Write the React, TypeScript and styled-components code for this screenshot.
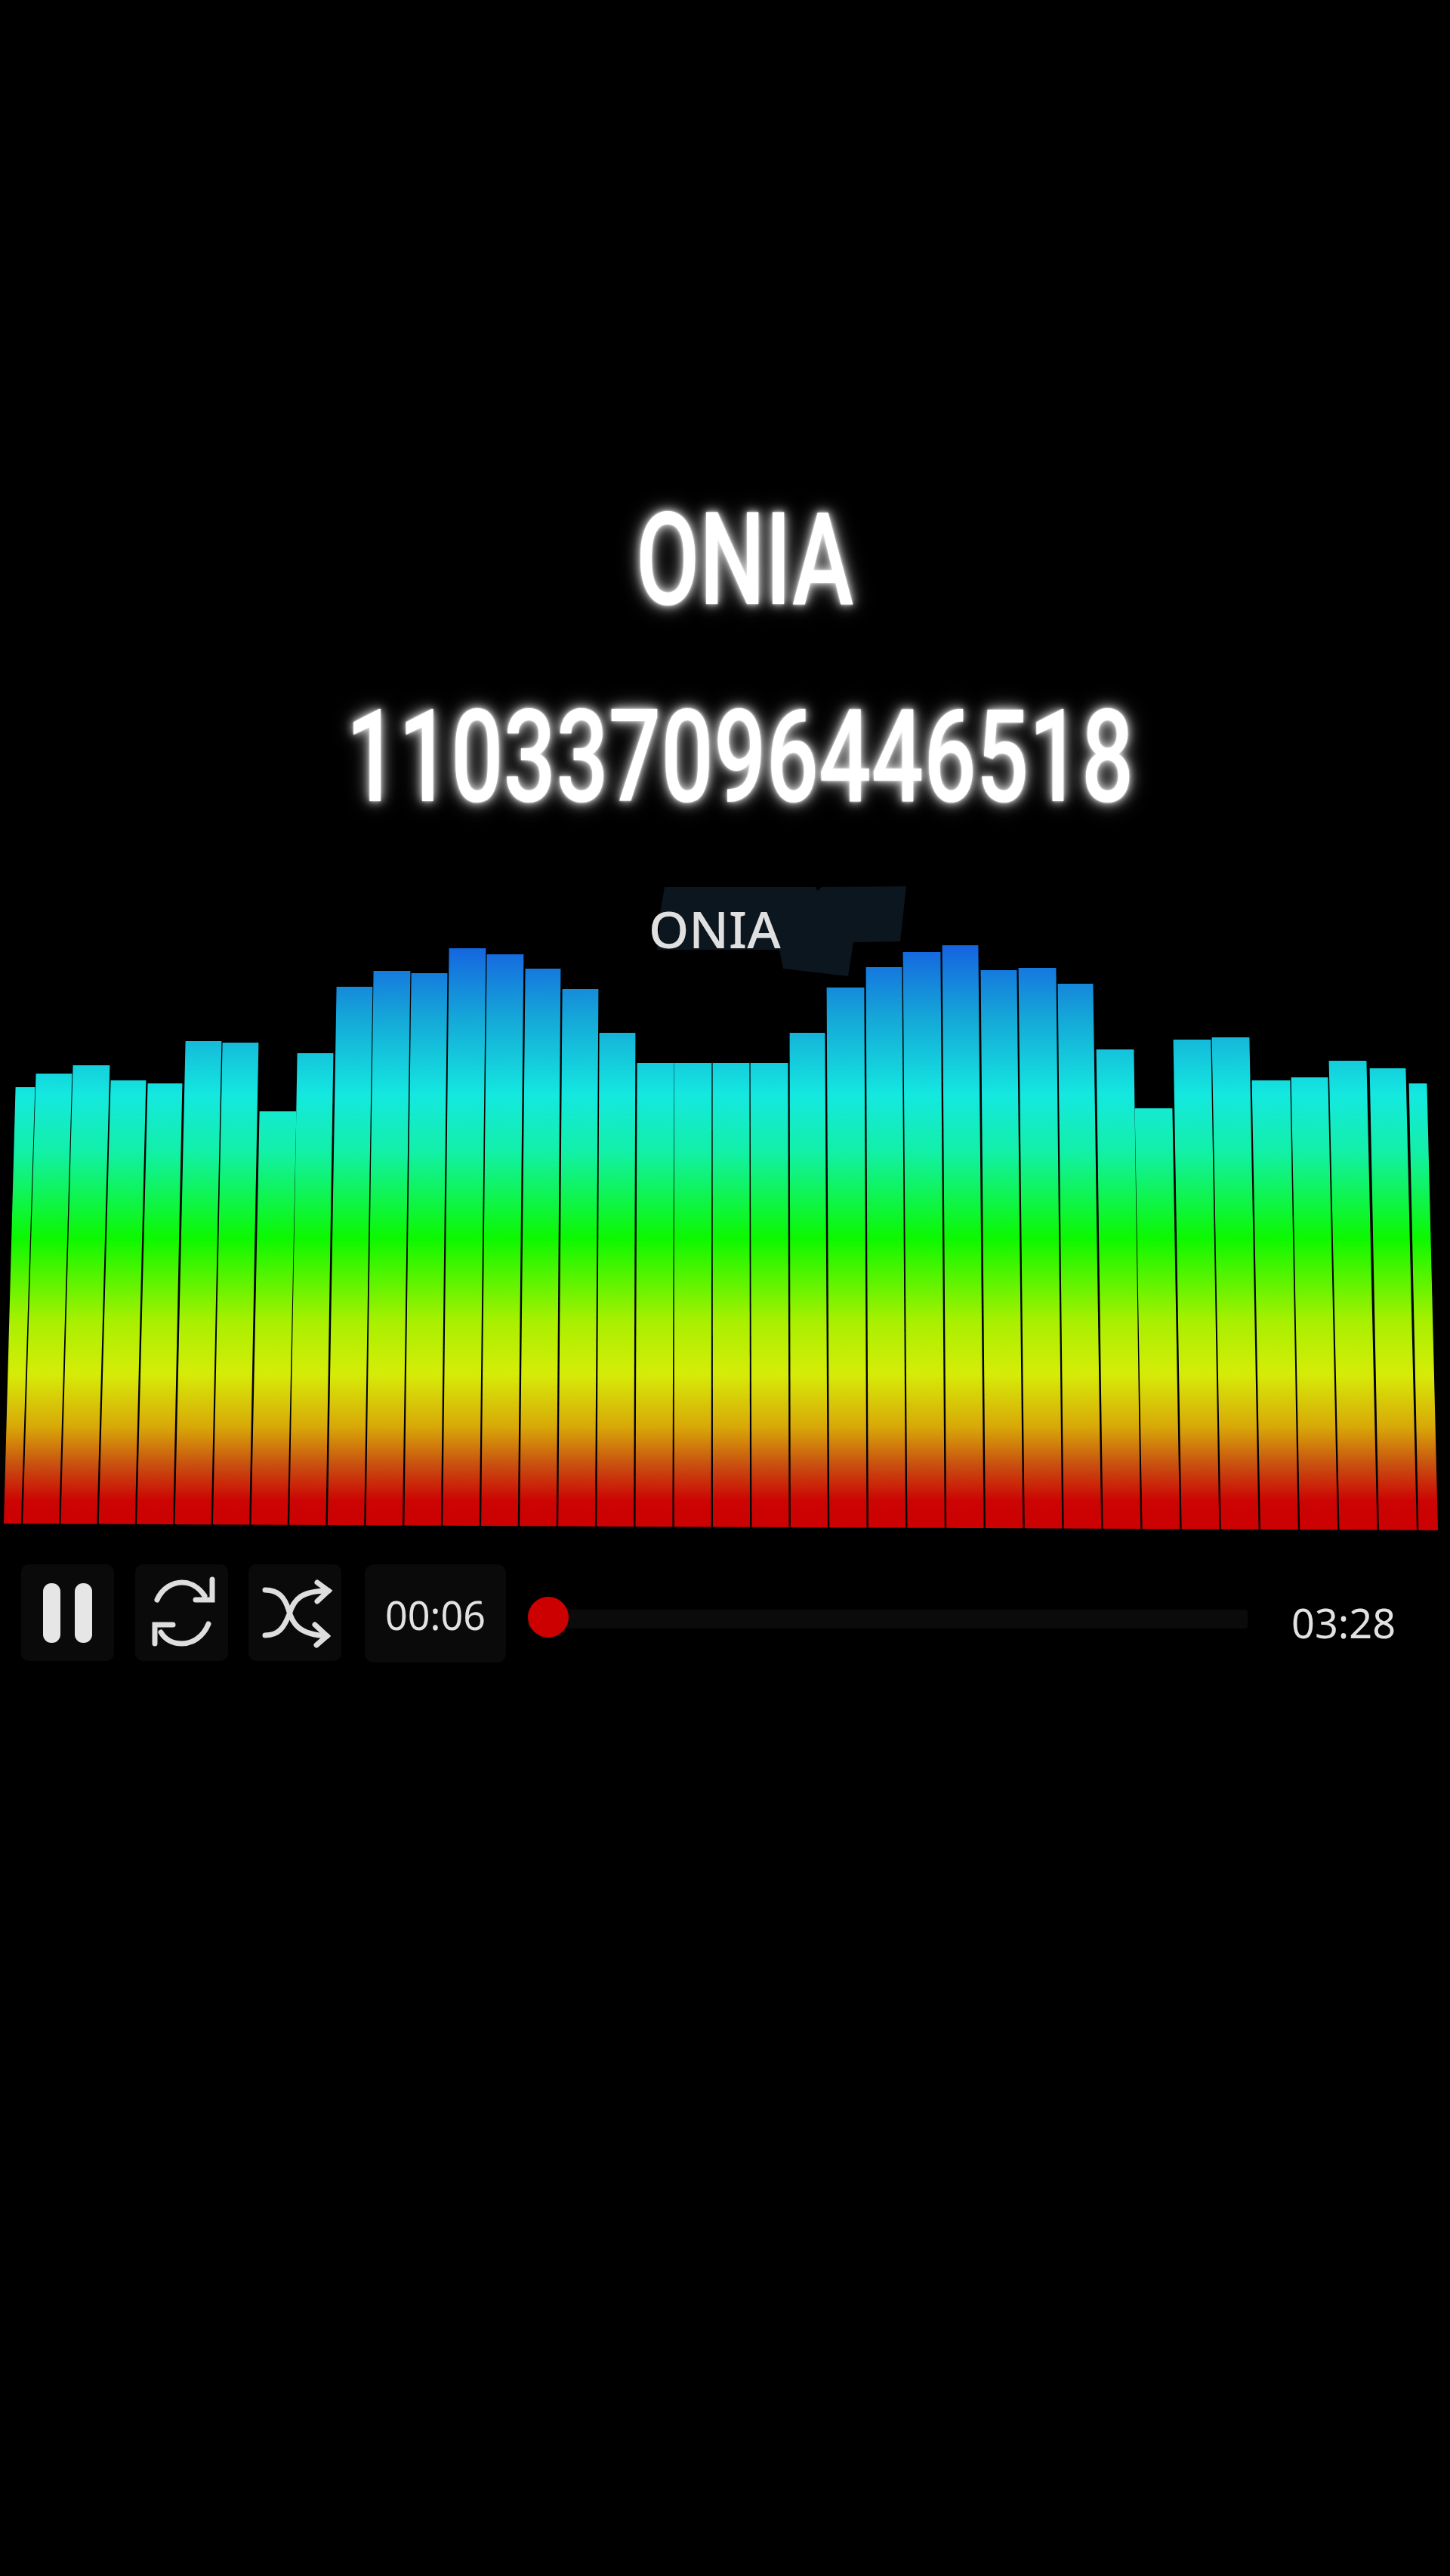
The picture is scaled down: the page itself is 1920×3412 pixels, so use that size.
import React from 'react';
import styled, { createGlobalStyle } from 'styled-components';

const GlobalStyle = createGlobalStyle`
  html, body {
    margin: 0;
    padding: 0;
    background: #000;
  }
`;

const Page = styled.div`
  width: 1920px;
  height: 3412px;
  overflow: hidden;
  background: #000;
  font-family: "Noto Sans", "Open Sans", sans-serif;
`;

const Headline = styled.header`
  display: flex;
  flex-direction: column;
  align-items: center;
  gap: 81px;
  height: 1170px;
  box-sizing: border-box;
  padding-top: 652px;
`;

const GlowText = styled.h1<{ $shift: number }>`
  margin: 0;
  height: 180px;
  line-height: 180px;
  font-family: Roboto, "Liberation Sans", sans-serif;
  font-size: 170px;
  font-weight: 500;
  color: #fff;
  white-space: nowrap;
  transform: translateX(${p => p.$shift}px) scaleX(0.72);
  text-shadow: 0 0 3px #fff, 0 0 12px rgba(255, 255, 255, 0.8), 0 0 22px rgba(255, 255, 255, 0.55), 0 0 36px rgba(255, 255, 255, 0.35);
`;

const Visualizer = styled.section`
  position: relative;
  height: 860px;
`;

const Spectrum = styled.svg`
  display: block;
  width: 1920px;
  height: 860px;
`;

const Caption = styled.span`
  position: absolute;
  left: 859px;
  top: 24px;
  font-size: 68px;
  line-height: 72px;
  font-weight: 500;
  color: #e0e0e0;
`;

const PlayerBar = styled.div`
  display: flex;
  align-items: flex-start;
  margin-top: 42px;
  padding-left: 28px;
`;

const ControlButton = styled.div<{ $gap: number }>`
  display: flex;
  align-items: center;
  justify-content: center;
  flex: none;
  width: 123px;
  height: 128px;
  margin-right: ${p => p.$gap}px;
  border-radius: 10px;
  background: #0a0a0a;
`;

const TimeBox = styled.div`
  display: flex;
  align-items: center;
  justify-content: center;
  flex: none;
  width: 187px;
  height: 130px;
  margin-right: 29px;
  border-radius: 12px;
  background: #0a0a0a;
  color: #e2e2e2;
  font-size: 52px;
  line-height: 1;
  padding-top: 3px;
  box-sizing: border-box;
`;

const Slider = styled.div`
  position: relative;
  flex: none;
  width: 953px;
  height: 25px;
  margin-top: 60px;
  border-radius: 4px;
  background: #0b0b0b;
`;

const Knob = styled.div`
  position: absolute;
  left: 0;
  top: -17px;
  width: 54px;
  height: 54px;
  border-radius: 50%;
  background: #cc0000;
`;

const TotalTime = styled.div`
  margin: 47px 0 0 58px;
  color: #e2e2e2;
  font-size: 54px;
  line-height: 60px;
`;

const Glyph = styled.svg`
  display: block;
  fill: none;
  stroke: #dedede;
  stroke-width: 7;
  stroke-linecap: round;
  stroke-linejoin: miter;
`;

const PauseBars = styled.div`
  display: flex;
  gap: 19px;
`;

const PauseBar = styled.span`
  width: 23px;
  height: 79px;
  border-radius: 11px;
  background: #e6e6e6;
`;

// left / right edge and top of every bar, read off the reference
const BARS: [number, number, number][] = [
  [21, 46, 1440], [48, 95, 1422], [97, 145, 1411], [147, 193, 1431], [196, 241, 1435],
  [246, 293, 1379], [295, 342, 1381], [344, 392, 1472], [394, 441, 1395], [446, 493, 1307],
  [495, 543, 1286], [545, 592, 1289], [595, 643, 1256], [645, 693, 1264], [696, 742, 1283],
  [745, 792, 1310], [794, 841, 1368], [844, 892, 1408], [893, 942, 1408], [944, 992, 1408],
  [994, 1043, 1408], [1046, 1092, 1368], [1095, 1144, 1308], [1147, 1194, 1281], [1196, 1245, 1261],
  [1248, 1295, 1252], [1299, 1346, 1285], [1349, 1398, 1282], [1401, 1447, 1303], [1452, 1501, 1390],
  [1503, 1552, 1468], [1554, 1603, 1377], [1605, 1654, 1374], [1658, 1708, 1431], [1710, 1758, 1427],
  [1760, 1809, 1405], [1814, 1861, 1415], [1866, 1889, 1435],
];

const STOPS: [number, string][] = [
  [1250, '#1562e0'], [1350, '#15a8d8'], [1450, '#14e8e0'], [1525, '#12f0a8'], [1640, '#0cf800'],
  [1750, '#a8f000'], [1820, '#d6ec08'], [1890, '#d8a808'], [1940, '#c85010'], [1988, '#cc0404'], [2030, '#cc0000'],
];

// the bars fan out towards the bottom edge, which also tilts a little
const seam = (i: number) => 29 + 50.2 * (i - 1) + 0.0316 * (i - 1) * (i - 1);
const floorAt = (x: number) => 2018 + (x / 1920) * 9;

const barPoints = ([left, right, top]: [number, number, number], i: number) => {
  const bottomLeft = i === 0 ? 5 : seam(i) + 1.2;
  const bottomRight = i === BARS.length - 1 ? 1904 : seam(i + 1) - 1.2;
  return `${left - 0.4},${top} ${right + 0.4},${top} ${bottomRight},${floorAt(bottomRight)} ${bottomLeft},${floorAt(bottomLeft)}`;
};

const App: React.FC = () => (
  <Page>
    <GlobalStyle />
    <Headline>
      <GlowText $shift={26}>ONIA</GlowText>
      <GlowText $shift={20}>110337096446518</GlowText>
    </Headline>

    <Visualizer>
      <Spectrum viewBox="0 1170 1920 860">
        <defs>
          <linearGradient id="spectrum" gradientUnits="userSpaceOnUse" x1="0" y1="1250" x2="0" y2="2030">
            {STOPS.map(([y, color]) => (
              <stop key={y} offset={(y - 1250) / 780} stopColor={color} />
            ))}
          </linearGradient>
        </defs>
        <polygon
          fill="#0c161e"
          points="880,1175 1080,1175 1082,1180 1088,1175 1200,1174 1192,1247 1130,1248 1123,1293 1037,1283 1032,1258 870,1258 875,1203"
        />
        {BARS.map((bar, i) => (
          <polygon key={i} fill="url(#spectrum)" points={barPoints(bar, i)} />
        ))}
      </Spectrum>
      <Caption>ONIA</Caption>
    </Visualizer>

    <PlayerBar>
      <ControlButton $gap={28}>
        <PauseBars>
          <PauseBar />
          <PauseBar />
        </PauseBars>
      </ControlButton>
      <ControlButton $gap={27}>
        <Glyph width="123" height="128" viewBox="0 0 123 128">
          <path d="M29 47 C36 31 50 24 62 24 C74 24 85 31 92 42" />
          <path d="M102 20 V47 H80" />
          <path d="M97 79 C90 96 76 105 62 105 C50 105 40 100 34 90" />
          <path d="M26 105 V80 H50" />
        </Glyph>
      </ControlButton>
      <ControlButton $gap={31}>
        <Glyph width="123" height="128" viewBox="0 0 123 128">
          <path d="M22 34 C40 34 48 44 53 60 C58 78 66 93 104 95" />
          <path d="M22 94 C40 94 47 84 54 66 C60 46 70 35 106 35" />
          <path d="M91 24 L106 35 L91 49" />
          <path d="M88 80 L104 95 L90 107" />
        </Glyph>
      </ControlButton>
      <TimeBox>00:06</TimeBox>
      <Slider>
        <Knob />
      </Slider>
      <TotalTime>03:28</TotalTime>
    </PlayerBar>
  </Page>
);

export default App;
